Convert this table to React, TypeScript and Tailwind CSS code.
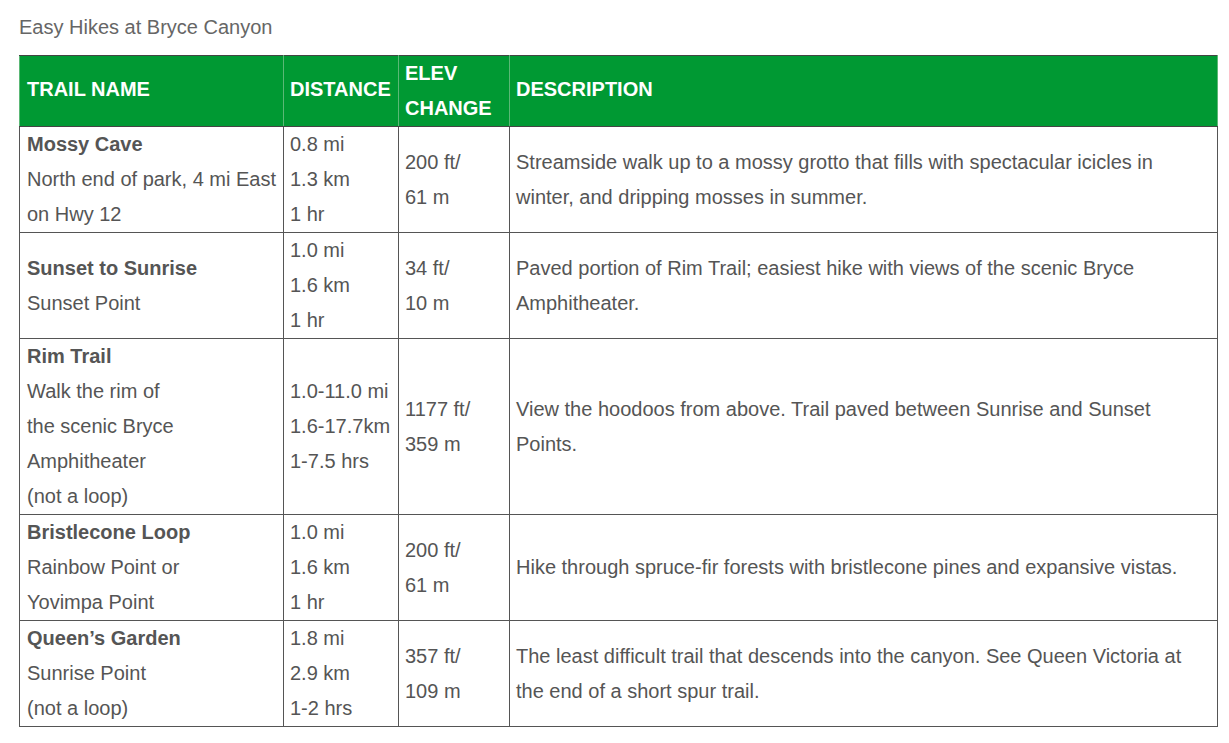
const rows = [
  {
    name: "Mossy Cave",
    where: ["North end of park, 4 mi East", "on Hwy 12"],
    dist: ["0.8 mi", "1.3 km", "1 hr"],
    elev: ["200 ft/", "61 m"],
    desc: "Streamside walk up to a mossy grotto that fills with spectacular icicles in winter, and dripping mosses in summer.",
  },
  {
    name: "Sunset to Sunrise",
    where: ["Sunset Point"],
    dist: ["1.0 mi", "1.6 km", "1 hr"],
    elev: ["34 ft/", "10 m"],
    desc: "Paved portion of Rim Trail; easiest hike with views of the scenic Bryce Amphitheater.",
  },
  {
    name: "Rim Trail",
    where: ["Walk the rim of", "the scenic Bryce", "Amphitheater", "(not a loop)"],
    dist: ["1.0-11.0 mi", "1.6-17.7km", "1-7.5 hrs"],
    elev: ["1177 ft/", "359 m"],
    desc: "View the hoodoos from above. Trail paved between Sunrise and Sunset Points.",
  },
  {
    name: "Bristlecone Loop",
    where: ["Rainbow Point or", "Yovimpa Point"],
    dist: ["1.0 mi", "1.6 km", "1 hr"],
    elev: ["200 ft/", "61 m"],
    desc: "Hike through spruce-fir forests with bristlecone pines and expansive vistas.",
  },
  {
    name: "Queen\u2019s Garden",
    where: ["Sunrise Point", "(not a loop)"],
    dist: ["1.8 mi", "2.9 km", "1-2 hrs"],
    elev: ["357 ft/", "109 m"],
    desc: "The least difficult trail that descends into the canyon. See Queen Victoria at the end of a short spur trail.",
  },
]

function Lines({ items }: { items: string[] }) {
  return (
    <>
      {items.map((t, i) => (
        <div key={i}>{t}</div>
      ))}
    </>
  )
}

export default function App() {
  return (
    <div className="min-h-screen bg-white px-[19px] pt-[13px] font-['Liberation_Sans',Arial,sans-serif] text-[20px] text-[#555]">
      <p className="mb-[14px] leading-[28px] text-[#666]">Easy Hikes at Bryce Canyon</p>
      <table className="w-[1199px] table-fixed border-collapse border border-[#444] leading-[35px]">
        <colgroup>
          <col className="w-[264px]" />
          <col className="w-[115px]" />
          <col className="w-[111px]" />
          <col />
        </colgroup>
        <thead>
          <tr className="bg-[#009933] text-left font-bold text-white">
            <th className="border border-[#444] border-x-[#5bb876] px-[7px] pt-0 pb-[3px] align-middle">TRAIL NAME</th>
            <th className="border border-[#444] border-x-[#5bb876] px-[6px] pt-0 pb-[3px] align-middle">DISTANCE</th>
            <th className="border border-[#444] border-x-[#5bb876] px-[6px] py-0 align-middle">
              <div>ELEV</div>
              <div>CHANGE</div>
            </th>
            <th className="border border-[#444] border-x-[#5bb876] px-[6px] pt-0 pb-[3px] align-middle">DESCRIPTION</th>
          </tr>
        </thead>
        <tbody>
          {rows.map((r) => (
            <tr key={r.name}>
              <td className="border border-[#555] px-[7px] py-0 align-middle">
                <div className="font-bold">{r.name}</div>
                <Lines items={r.where} />
              </td>
              <td className="border border-[#555] px-[6px] py-0 align-middle">
                <Lines items={r.dist} />
              </td>
              <td className="border border-[#555] px-[6px] py-0 align-middle">
                <Lines items={r.elev} />
              </td>
              <td className="border border-[#555] py-0 pl-[6px] pr-[10px] align-middle">{r.desc}</td>
            </tr>
          ))}
        </tbody>
      </table>
    </div>
  )
}
